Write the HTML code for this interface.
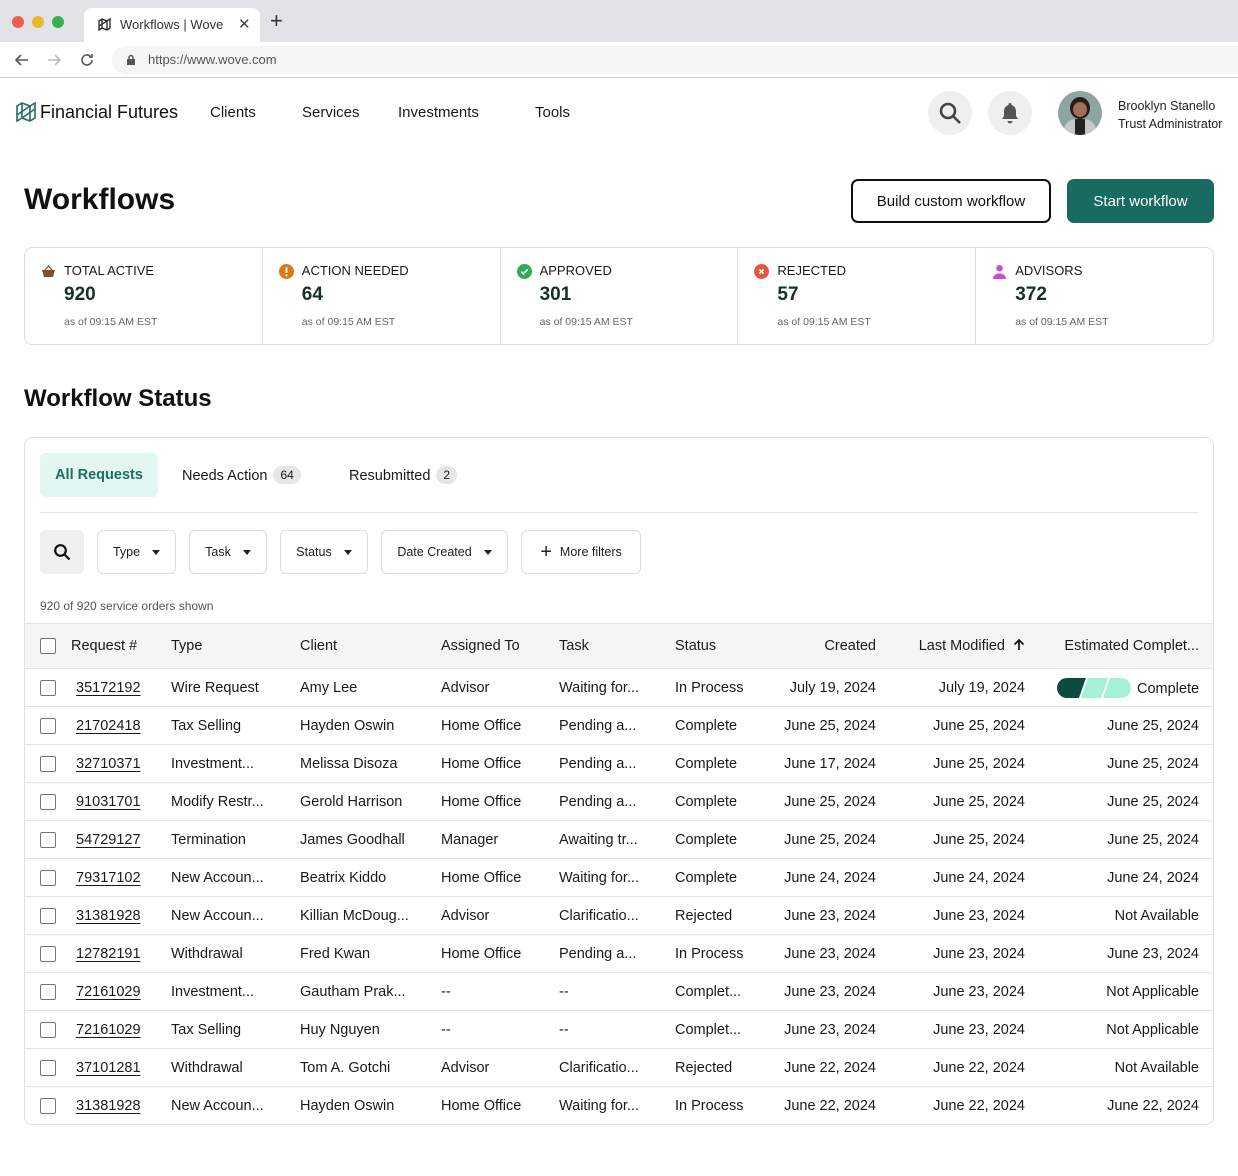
<!DOCTYPE html>
<html><head><meta charset="utf-8">
<style>
*{box-sizing:border-box;margin:0;padding:0}
body{width:1238px;height:1176px;background:#fff;font-family:"Liberation Sans",Arial,sans-serif;color:#1a1a1a;position:relative;overflow:hidden}
.abs{position:absolute}
.chrome{position:absolute;left:0;top:0;width:1238px;height:42px;background:#e3e2e6}
.dot{position:absolute;top:16px;width:12px;height:12px;border-radius:50%}
.tab{position:absolute;left:84px;top:8px;width:176px;height:34px;background:#fff;border-radius:8px 8px 0 0;font-size:13px;color:#333}
.addr{position:absolute;left:0;top:42px;width:1238px;height:36px;background:#fff;border-bottom:1px solid #c8c8c8}
.url{position:absolute;left:112px;top:4px;width:1126px;height:28px;background:#f6f6f7;border-radius:14px 0 0 14px;font-size:13px;color:#555}
.nav{font-size:15px;color:#1a1a1a;position:absolute;top:104px}
.circ{position:absolute;top:91px;width:44px;height:44px;border-radius:50%;background:#efefef}
.btn{position:absolute;top:179px;height:44px;border-radius:7px;font-size:15px;display:flex;align-items:center;justify-content:center}
.stats{position:absolute;left:24px;top:247px;width:1190px;height:98px;border:1px solid #dedede;border-radius:8px;display:flex}
.stat{flex:1;border-right:1px solid #dedede;position:relative}
.stat:last-child{border-right:none}
.stat .lbl{position:absolute;left:39px;top:15px;font-size:13px;color:#1a1a1a}
.stat .num{position:absolute;left:39px;top:36px;font-size:19px;font-weight:bold;color:#16302a}
.stat .sub{position:absolute;left:39px;top:68px;font-size:10.5px;color:#666}
.stat .ic{position:absolute;left:16px;top:16px;width:15px;height:15px}
.card{position:absolute;left:24px;top:437px;width:1190px;height:688px;border:1px solid #e0e0e0;border-radius:8px;overflow:hidden}
.badge{display:inline-block;background:#e6e6e8;border-radius:10px;font-size:12px;padding:2px 7px;margin-left:6px;vertical-align:1px}
.filt{position:absolute;top:92px;height:44px;border:1.5px solid #dcdcdc;border-radius:6px;font-size:12.5px;display:flex;align-items:center;justify-content:center;color:#222}
.car{display:inline-block;width:0;height:0;border-left:4.5px solid transparent;border-right:4.5px solid transparent;border-top:5px solid #222;margin-left:12px}
table{position:absolute;left:-1px;top:185px;width:1190px;border-collapse:collapse;table-layout:fixed;font-size:14.5px}
td,th{white-space:nowrap;overflow:hidden;border-bottom:1px solid #e3e3e3;height:38px;padding:0 16px;font-weight:normal;text-align:left}
th{height:45px;background:#f5f5f5;border-top:1px solid #e3e3e3}
tr:last-child td{border-bottom:none}
.r{text-align:right}
.cb{display:inline-block;width:16px;height:16px;border:1.5px solid #777;border-radius:2px;background:#fff;vertical-align:middle}
td.c1,th.c1{padding:0 0 0 16px}
td.c2{text-align:right;text-decoration:underline;text-underline-offset:3px}
th.c2{padding-left:11px}
</style></head><body>
<div class="chrome">
 <div class="dot" style="left:12px;background:#ec5e4b"></div>
 <div class="dot" style="left:32px;background:#e7b92c"></div>
 <div class="dot" style="left:52px;background:#35b34a"></div>
 <div class="tab"><svg class="abs" style="left:14px;top:10px" width="13" height="13" viewBox="0 0 13 13" fill="none" stroke="#222" stroke-width="1.3"><path d="M1 3l3-2 5 2 3-2v9l-3 2-5-2-3 2z M4 1v9 M9 3v9 M1 8l8-5"/></svg><span class="abs" style="left:36px;top:9px">Workflows | Wove</span><span class="abs" style="left:154px;top:7px;font-size:15px;color:#444">✕</span></div>
 <span class="abs" style="left:270px;top:10px;font-size:22px;color:#333;line-height:22px">+</span>
</div>
<div class="addr">
 <svg class="abs" style="left:14px;top:10px" width="16" height="16" viewBox="0 0 16 16" fill="none" stroke="#555" stroke-width="1.6"><path d="M14 8H2M7 3L2 8l5 5"/></svg>
 <svg class="abs" style="left:46px;top:10px" width="16" height="16" viewBox="0 0 16 16" fill="none" stroke="#bbb" stroke-width="1.6"><path d="M2 8h12M9 3l5 5-5 5"/></svg>
 <svg class="abs" style="left:79px;top:10px" width="16" height="16" viewBox="0 0 16 16" fill="none" stroke="#555" stroke-width="1.6"><path d="M13 8a5 5 0 1 1-1.5-3.6M13 2v3h-3"/></svg>
 <div class="url"><svg class="abs" style="left:14px;top:8px" width="10" height="12" viewBox="0 0 10 12"><rect x="1" y="5" width="8" height="6" fill="#555"/><path d="M3 5V3.5a2 2 0 0 1 4 0V5" stroke="#555" stroke-width="1.4" fill="none"/></svg><span class="abs" style="left:36px;top:6px">https://www.wove.com</span></div>
</div>
<svg class="abs" style="left:16px;top:102px" width="20" height="20" viewBox="0 0 20 20" fill="none" stroke="#1f6e62" stroke-width="1.6"><path d="M1 4l5-3 8 3 5-3v15l-5 3-8-3-5 3z M6 1v15 M14 4v15 M1 13l13-9 M6 16l13-9"/></svg>
<div class="abs" style="left:40px;top:102px;font-size:18px;color:#111">Financial Futures</div>
<div class="nav" style="left:210px">Clients</div>
<div class="nav" style="left:302px">Services</div>
<div class="nav" style="left:398px">Investments</div>
<div class="nav" style="left:535px">Tools</div>
<div class="circ" style="left:928px"><svg class="abs" style="left:10px;top:10px" width="24" height="24" viewBox="0 0 24 24" fill="none" stroke="#444" stroke-width="2.6"><circle cx="10" cy="10" r="7"/><path d="M15 15l7 7"/></svg></div>
<div class="circ" style="left:988px"><svg class="abs" style="left:12px;top:10px" width="20" height="24" viewBox="0 0 20 24" fill="#555"><path d="M10 2a1.5 1.5 0 0 1 1.5 1.5v.5A6 6 0 0 1 16 10v5l2 3H2l2-3v-5a6 6 0 0 1 4.5-6v-.5A1.5 1.5 0 0 1 10 2z"/><path d="M7.5 20h5a2.5 2.5 0 0 1-5 0z"/></svg></div>
<div class="abs" style="left:1058px;top:91px;width:44px;height:44px;border-radius:50%;background:#8ba6a0;overflow:hidden"><div class="abs" style="left:12px;top:6px;width:20px;height:22px;border-radius:50%;background:#2a1d17"></div><div class="abs" style="left:15px;top:11px;width:14px;height:15px;border-radius:50%;background:#a0705a"></div><div class="abs" style="left:6px;top:28px;width:32px;height:20px;border-radius:12px 12px 0 0;background:#c8c8c8"></div><div class="abs" style="left:17px;top:28px;width:10px;height:16px;background:#222"></div></div>
<div class="abs" style="left:1118px;top:97px;font-size:12.5px;line-height:18px;color:#222">Brooklyn Stanello<br>Trust Administrator</div>

<div class="abs" style="left:24px;top:183px;font-size:30px;font-weight:bold;color:#111">Workflows</div>
<div class="btn" style="left:851px;width:200px;border:2px solid #111;color:#111">Build custom workflow</div>
<div class="btn" style="left:1067px;width:147px;background:#176b5f;color:#fff">Start workflow</div>

<div class="stats">
 <div class="stat"><svg class="ic" viewBox="0 0 15 15"><path d="M4 6l3.5-4L11 6" stroke="#7a5230" stroke-width="1.3" fill="none"/><path d="M1 6h13l-2 7H3z" fill="#7a5230"/></svg><div class="lbl">TOTAL ACTIVE</div><div class="num">920</div><div class="sub">as of 09:15 AM EST</div></div>
 <div class="stat"><svg class="ic" viewBox="0 0 16 16"><circle cx="8" cy="8" r="8" fill="#d97a14"/><rect x="7" y="3.5" width="2" height="6" fill="#fff"/><circle cx="8" cy="12" r="1.1" fill="#fff"/></svg><div class="lbl">ACTION NEEDED</div><div class="num">64</div><div class="sub">as of 09:15 AM EST</div></div>
 <div class="stat"><svg class="ic" viewBox="0 0 16 16"><circle cx="8" cy="8" r="8" fill="#2eab5c"/><path d="M4.5 8.2l2.3 2.3 4.5-4.7" stroke="#fff" stroke-width="1.8" fill="none"/></svg><div class="lbl">APPROVED</div><div class="num">301</div><div class="sub">as of 09:15 AM EST</div></div>
 <div class="stat"><svg class="ic" viewBox="0 0 16 16"><circle cx="8" cy="8" r="8" fill="#e4573d"/><path d="M5.8 5.8l4.4 4.4M10.2 5.8l-4.4 4.4" stroke="#fff" stroke-width="1.6"/></svg><div class="lbl">REJECTED</div><div class="num">57</div><div class="sub">as of 09:15 AM EST</div></div>
 <div class="stat"><svg class="ic" viewBox="0 0 16 16" fill="#c24fd6"><circle cx="8" cy="4.5" r="3.5"/><path d="M1 16a7 6 0 0 1 14 0z"/></svg><div class="lbl">ADVISORS</div><div class="num">372</div><div class="sub">as of 09:15 AM EST</div></div>
</div>

<div class="abs" style="left:24px;top:385px;font-size:24px;font-weight:bold;color:#111">Workflow Status</div>

<div class="card">
 <div class="abs" style="left:15px;top:15px;width:118px;height:44px;border-radius:6px;background:#e2f7f2;color:#1f6e62;font-weight:bold;font-size:14.5px;display:flex;align-items:center;justify-content:center">All Requests</div>
 <div class="abs" style="left:157px;top:28px;font-size:14.5px">Needs Action<span class="badge">64</span></div>
 <div class="abs" style="left:324px;top:28px;font-size:14.5px">Resubmitted<span class="badge">2</span></div>
 <div class="abs" style="left:15px;top:74px;width:1158px;height:1px;background:#e3e3e3"></div>
 <div class="abs" style="left:15px;top:92px;width:44px;height:44px;border-radius:6px;background:#efefef"><svg class="abs" style="left:13px;top:13px" width="18" height="18" viewBox="0 0 18 18" fill="none" stroke="#111" stroke-width="2.2"><circle cx="7.5" cy="7.5" r="5.3"/><path d="M11.5 11.5l5 5"/></svg></div>
 <div class="filt" style="left:72px;width:79px">Type<span class="car"></span></div>
 <div class="filt" style="left:164px;width:78px">Task<span class="car"></span></div>
 <div class="filt" style="left:255px;width:88px">Status<span class="car"></span></div>
 <div class="filt" style="left:356px;width:127px">Date Created<span class="car"></span></div>
 <div class="filt" style="left:496px;width:120px"><span style="font-size:20px;margin-right:8px;line-height:16px">+</span>More filters</div>
 <div class="abs" style="left:15px;top:161px;font-size:12px;color:#555">920 of 920 service orders shown</div>
 <table>
  <colgroup><col style="width:36px"><col style="width:95px"><col style="width:129px"><col style="width:141px"><col style="width:118px"><col style="width:116px"><col style="width:101px"><col style="width:132px"><col style="width:149px"><col style="width:173px"></colgroup>
  <tr><th class="c1"><span class="cb"></span></th><th class="c2">Request #</th><th>Type</th><th>Client</th><th>Assigned To</th><th>Task</th><th>Status</th><th class="r">Created</th><th class="r">Last Modified <svg width="12" height="13" viewBox="0 0 12 13" fill="none" stroke="#111" stroke-width="1.7" style="margin-left:4px;vertical-align:-1px"><path d="M6 12V2M1.5 6.5L6 2l4.5 4.5"/></svg></th><th class="r" style="padding-right:15px">Estimated Complet...</th></tr>
  <tr><td class="c1"><span class="cb"></span></td><td class="c2">35172192</td><td>Wire Request</td><td>Amy Lee</td><td>Advisor</td><td>Waiting for...</td><td>In Process</td><td class="r">July 19, 2024</td><td class="r">July 19, 2024</td><td class="r" style="padding-right:15px"><svg width="74" height="20" viewBox="0 0 74 20" style="vertical-align:-5px;margin-right:6px"><defs><clipPath id="p"><rect width="74" height="20" rx="10"/></clipPath></defs><g clip-path="url(#p)"><rect width="74" height="20" fill="#a6efd9"/><path d="M0 0h29l-7 20H0z" fill="#0f4a40"/><path d="M29 0h2l-7 20h-2zM51 0h2l-7 20h-2z" fill="#fff"/></g></svg>Complete</td></tr>
  <tr><td class="c1"><span class="cb"></span></td><td class="c2">21702418</td><td>Tax Selling</td><td>Hayden Oswin</td><td>Home Office</td><td>Pending a...</td><td>Complete</td><td class="r">June 25, 2024</td><td class="r">June 25, 2024</td><td class="r" style="padding-right:15px">June 25, 2024</td></tr>
  <tr><td class="c1"><span class="cb"></span></td><td class="c2">32710371</td><td>Investment...</td><td>Melissa Disoza</td><td>Home Office</td><td>Pending a...</td><td>Complete</td><td class="r">June 17, 2024</td><td class="r">June 25, 2024</td><td class="r" style="padding-right:15px">June 25, 2024</td></tr>
  <tr><td class="c1"><span class="cb"></span></td><td class="c2">91031701</td><td>Modify Restr...</td><td>Gerold Harrison</td><td>Home Office</td><td>Pending a...</td><td>Complete</td><td class="r">June 25, 2024</td><td class="r">June 25, 2024</td><td class="r" style="padding-right:15px">June 25, 2024</td></tr>
  <tr><td class="c1"><span class="cb"></span></td><td class="c2">54729127</td><td>Termination</td><td>James Goodhall</td><td>Manager</td><td>Awaiting tr...</td><td>Complete</td><td class="r">June 25, 2024</td><td class="r">June 25, 2024</td><td class="r" style="padding-right:15px">June 25, 2024</td></tr>
  <tr><td class="c1"><span class="cb"></span></td><td class="c2">79317102</td><td>New Accoun...</td><td>Beatrix Kiddo</td><td>Home Office</td><td>Waiting for...</td><td>Complete</td><td class="r">June 24, 2024</td><td class="r">June 24, 2024</td><td class="r" style="padding-right:15px">June 24, 2024</td></tr>
  <tr><td class="c1"><span class="cb"></span></td><td class="c2">31381928</td><td>New Accoun...</td><td>Killian McDoug...</td><td>Advisor</td><td>Clarificatio...</td><td>Rejected</td><td class="r">June 23, 2024</td><td class="r">June 23, 2024</td><td class="r" style="padding-right:15px">Not Available</td></tr>
  <tr><td class="c1"><span class="cb"></span></td><td class="c2">12782191</td><td>Withdrawal</td><td>Fred Kwan</td><td>Home Office</td><td>Pending a...</td><td>In Process</td><td class="r">June 23, 2024</td><td class="r">June 23, 2024</td><td class="r" style="padding-right:15px">June 23, 2024</td></tr>
  <tr><td class="c1"><span class="cb"></span></td><td class="c2">72161029</td><td>Investment...</td><td>Gautham Prak...</td><td>--</td><td>--</td><td>Complet...</td><td class="r">June 23, 2024</td><td class="r">June 23, 2024</td><td class="r" style="padding-right:15px">Not Applicable</td></tr>
  <tr><td class="c1"><span class="cb"></span></td><td class="c2">72161029</td><td>Tax Selling</td><td>Huy Nguyen</td><td>--</td><td>--</td><td>Complet...</td><td class="r">June 23, 2024</td><td class="r">June 23, 2024</td><td class="r" style="padding-right:15px">Not Applicable</td></tr>
  <tr><td class="c1"><span class="cb"></span></td><td class="c2">37101281</td><td>Withdrawal</td><td>Tom A. Gotchi</td><td>Advisor</td><td>Clarificatio...</td><td>Rejected</td><td class="r">June 22, 2024</td><td class="r">June 22, 2024</td><td class="r" style="padding-right:15px">Not Available</td></tr>
  <tr><td class="c1"><span class="cb"></span></td><td class="c2">31381928</td><td>New Accoun...</td><td>Hayden Oswin</td><td>Home Office</td><td>Waiting for...</td><td>In Process</td><td class="r">June 22, 2024</td><td class="r">June 22, 2024</td><td class="r" style="padding-right:15px">June 22, 2024</td></tr>
 </table>
</div>
</body></html>
